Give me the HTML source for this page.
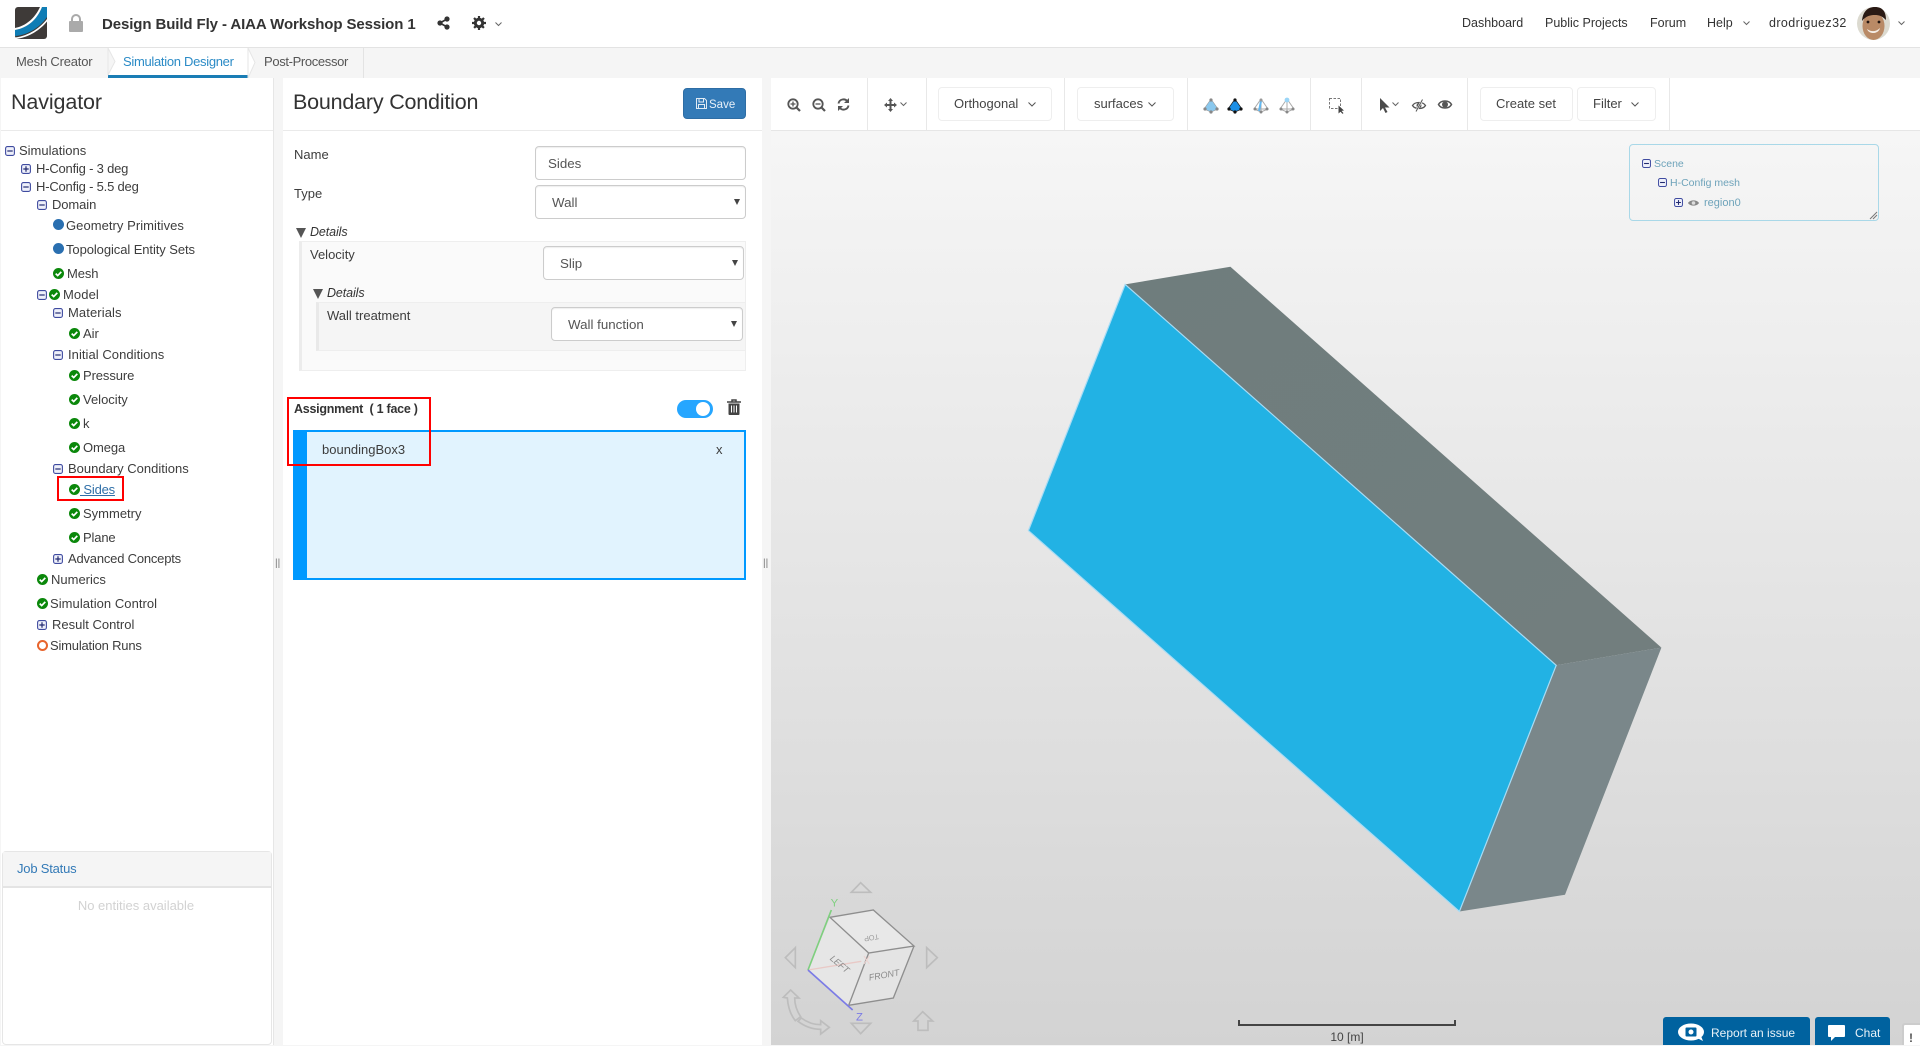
<!DOCTYPE html>
<html><head><meta charset="utf-8"><title>Simulation Designer</title>
<style>
html,body{margin:0;padding:0;width:1920px;height:1045px;overflow:hidden;background:#f5f5f5;font-family:"Liberation Sans",sans-serif;color:#3a3a3a}
.a{position:absolute}
.t{position:absolute;white-space:nowrap;font-size:13px;line-height:16px;color:#3d3d3d;margin-top:1px}
.hd{font-size:21.5px;line-height:28px;color:#333;margin-top:0}
.sel,.inp{position:absolute;box-sizing:border-box;background:#fff;border:1px solid #ccc;border-radius:4px;height:34px;font-size:13.33px;line-height:34px;color:#555;box-shadow:inset 0 1px 1px rgba(0,0,0,.07)}
.sel i{position:absolute;right:5px;top:13px;width:0;height:0;border-left:3.5px solid transparent;border-right:3.5px solid transparent;border-top:6px solid #444}
.btn{position:absolute;box-sizing:border-box;height:34px;background:#fff;border:1px solid #eee;border-radius:4px;font-size:13px;line-height:32px;color:#444}
.sep{position:absolute;top:78px;height:52px;width:1px;background:#e8e8e8}
.nv{position:absolute;top:15px;font-size:12.5px;line-height:16px;color:#333;white-space:nowrap}
svg{position:absolute;overflow:visible}
</style></head><body>
<svg width="0" height="0" style="position:absolute"><defs>
<g id="mi"><rect x=".6" y=".6" width="8.8" height="8.8" rx="1.8" fill="#eef0fa" stroke="#3f4ba0" stroke-width="1.1"/><path d="M2.3 5h5.4" stroke="#222a70" stroke-width="1.2"/></g>
<g id="pl"><rect x=".6" y=".6" width="8.8" height="8.8" rx="1.8" fill="#eef0fa" stroke="#3f4ba0" stroke-width="1.1"/><path d="M2.3 5h5.4M5 2.3v5.4" stroke="#222a70" stroke-width="1.2"/></g>
<g id="ck"><circle cx="5.5" cy="5.5" r="5.5" fill="#0b880b"/><path d="M2.7 5.6l2 2 3.6-3.7" fill="none" stroke="#fff" stroke-width="1.7"/></g>
<g id="tri"><path d="M8 1L1 11l7 3 7-3z" fill="#8ac8ee" stroke="#999" stroke-width=".6"/><circle cx="8" cy="2" r="1.6" fill="#888"/><circle cx="2" cy="11" r="1.6" fill="#888"/><circle cx="14" cy="11" r="1.6" fill="#888"/><circle cx="8" cy="14" r="1.6" fill="#888"/></g>
</defs></svg>

<!-- header -->
<div class="a" style="left:0;top:0;width:1920px;height:47px;background:#fff;border-bottom:1px solid #e3e3e3"></div>
<svg style="left:15px;top:7px" width="32" height="32" viewBox="0 0 32 32"><rect width="32" height="32" rx="3" fill="#3e3a38"/><path d="M0 23C12 21 22 13 27 0H32V10C26 19 14 28 0 29z" fill="#0f7db5"/><path d="M0 21C11 19 20 11 25 0H27C22 13 12 21 0 23z" fill="#fff"/><path d="M0 30.500C14 29 26 20 32 12V14.500C26 22 14 31 0 32z" fill="#fff"/></svg>
<svg style="left:69px;top:14px" width="14" height="18" viewBox="0 0 14 18"><path d="M3 8V5a4 4 0 0 1 8 0v3" fill="none" stroke="#aaa" stroke-width="2"/><rect y="7" width="14" height="11" rx="1" fill="#aaa"/></svg>
<div class="t" style="left:102px;top:15px;font-size:15px;line-height:18px;font-weight:bold;color:#333;letter-spacing:-.1px" >Design Build Fly - AIAA Workshop Session 1</div>
<svg style="left:437px;top:16px" width="13" height="14" viewBox="0 0 13 14"><path d="M3 7l7-4M3 7l7 4" stroke="#333" stroke-width="1.6"/><circle cx="3" cy="7" r="2.6" fill="#333"/><circle cx="10" cy="3" r="2.6" fill="#333"/><circle cx="10" cy="11" r="2.6" fill="#333"/></svg>
<svg style="left:472px;top:16px" width="14" height="14" viewBox="0 0 14 14"><circle cx="7" cy="7" r="3.7" fill="none" stroke="#333" stroke-width="3"/><path d="M7 0v14M0 7h14M2 2l10 10M12 2L2 12" stroke="#333" stroke-width="2.2" stroke-dasharray="2.4 9.2 2.4"/></svg>
<svg style="left:495px;top:22px" width="7" height="5" viewBox="0 0 7 5"><path d="M.5 .5L3.5 3.5 6.5 .5" fill="none" stroke="#666"/></svg>
<div class="nv" style="left:1462px">Dashboard</div>
<div class="nv" style="left:1545px">Public Projects</div>
<div class="nv" style="left:1650px">Forum</div>
<div class="nv" style="left:1707px">Help</div>
<svg style="left:1743px;top:21px" width="7" height="5" viewBox="0 0 7 5"><path d="M.5 .5L3.5 3.5 6.5 .5" fill="none" stroke="#666"/></svg>
<div class="nv" style="left:1769px;letter-spacing:.4px">drodriguez32</div>
<svg style="left:1857px;top:7px" width="33" height="33" viewBox="0 0 33 33"><circle cx="16.5" cy="16.5" r="16.5" fill="#dcdad0"/><ellipse cx="16.5" cy="19" rx="11" ry="14" fill="#b98a66"/><path d="M5 14C6 3 12 0 18 0c8 0 11 5 11 13-4-4-7-5-11-5-5 0-9 1-13 6z" fill="#2a1a14"/><path d="M10 22c4 3 9 3 13-1-1 6-11 7-13 1z" fill="#f4ece4"/><circle cx="11" cy="15" r="1.4" fill="#201410"/><circle cx="22" cy="15" r="1.4" fill="#201410"/></svg>
<svg style="left:1898px;top:21px" width="7" height="5" viewBox="0 0 7 5"><path d="M.5 .5L3.5 3.5 6.5 .5" fill="none" stroke="#666"/></svg>

<!-- tabs -->
<div class="a" style="left:0;top:48px;width:363px;height:30px;background:#f5f5f5;border-right:1px solid #e3e3e3"></div>
<div class="a" style="left:108px;top:48px;width:140px;height:27px;background:#fff;border-bottom:3px solid #1a7db5"></div>
<svg style="left:108px;top:48px" width="10" height="27" viewBox="0 0 10 27"><path d="M0 0L7 13.5 0 27z" fill="#f5f5f5" stroke="#e6e6e6"/></svg>
<svg style="left:248px;top:48px" width="10" height="30" viewBox="0 0 10 30"><path d="M0 0L7 14.5 0 30z" fill="#fff" stroke="#e6e6e6"/></svg>
<div class="t" style="left:16px;top:54px;margin-top:0;color:#555;letter-spacing:-.2px">Mesh Creator</div>
<div class="t" style="left:123px;top:54px;margin-top:0;color:#2b8bc6;letter-spacing:-.3px">Simulation Designer</div>
<div class="t" style="left:264px;top:54px;margin-top:0;color:#555;letter-spacing:-.35px">Post-Processor</div>

<!-- navigator panel -->
<div class="a" style="left:1px;top:78px;width:272px;height:967px;background:#fff;border-right:1px solid #e6e6e6"></div>
<div class="a" style="left:1px;top:130px;width:272px;height:1px;background:#eaeaea"></div>
<div class="t hd" style="left:11px;top:88px;letter-spacing:-.12px">Navigator</div>

<svg style="left:5px;top:146px" width="10" height="10"><use href="#mi"/></svg><div class="t" style="left:19px;top:142px">Simulations</div>
<svg style="left:21px;top:164px" width="10" height="10"><use href="#pl"/></svg><div class="t" style="left:36px;top:160px;letter-spacing:-.2px">H-Config - 3 deg</div>
<svg style="left:21px;top:182px" width="10" height="10"><use href="#mi"/></svg><div class="t" style="left:36px;top:178px;letter-spacing:-.2px">H-Config - 5.5 deg</div>
<svg style="left:37px;top:200px" width="10" height="10"><use href="#mi"/></svg><div class="t" style="left:52px;top:196px;letter-spacing:-.1px">Domain</div>
<div class="a" style="left:53px;top:219px;width:11px;height:11px;border-radius:50%;background:#2a6fb0"></div><div class="t" style="left:66px;top:217px;letter-spacing:.05px">Geometry Primitives</div>
<div class="a" style="left:53px;top:243px;width:11px;height:11px;border-radius:50%;background:#2a6fb0"></div><div class="t" style="left:66px;top:241px;letter-spacing:-.08px">Topological Entity Sets</div>
<svg style="left:53px;top:268px" width="11" height="11"><use href="#ck"/></svg><div class="t" style="left:67px;top:265px;letter-spacing:-.1px">Mesh</div>
<svg style="left:37px;top:290px" width="10" height="10"><use href="#mi"/></svg><svg style="left:49px;top:289px" width="11" height="11"><use href="#ck"/></svg><div class="t" style="left:63px;top:286px;letter-spacing:.1px">Model</div>
<svg style="left:53px;top:308px" width="10" height="10"><use href="#mi"/></svg><div class="t" style="left:68px;top:304px;letter-spacing:.1px">Materials</div>
<svg style="left:69px;top:328px" width="11" height="11"><use href="#ck"/></svg><div class="t" style="left:83px;top:325px">Air</div>
<svg style="left:53px;top:350px" width="10" height="10"><use href="#mi"/></svg><div class="t" style="left:68px;top:346px;letter-spacing:.05px">Initial Conditions</div>
<svg style="left:69px;top:370px" width="11" height="11"><use href="#ck"/></svg><div class="t" style="left:83px;top:367px;letter-spacing:-.1px">Pressure</div>
<svg style="left:69px;top:394px" width="11" height="11"><use href="#ck"/></svg><div class="t" style="left:83px;top:391px">Velocity</div>
<svg style="left:69px;top:418px" width="11" height="11"><use href="#ck"/></svg><div class="t" style="left:83px;top:415px">k</div>
<svg style="left:69px;top:442px" width="11" height="11"><use href="#ck"/></svg><div class="t" style="left:83px;top:439px;letter-spacing:-.1px">Omega</div>
<svg style="left:53px;top:464px" width="10" height="10"><use href="#mi"/></svg><div class="t" style="left:68px;top:460px">Boundary Conditions</div>
<div class="a" style="left:57px;top:476px;width:63px;height:21px;border:2px solid #f00"></div>
<svg style="left:69px;top:484px" width="11" height="11"><use href="#ck"/></svg><div class="t" style="left:80px;top:481px;color:#2f6fa8;text-decoration:underline;letter-spacing:-.2px">&nbsp;Sides</div>
<svg style="left:69px;top:508px" width="11" height="11"><use href="#ck"/></svg><div class="t" style="left:83px;top:505px">Symmetry</div>
<svg style="left:69px;top:532px" width="11" height="11"><use href="#ck"/></svg><div class="t" style="left:83px;top:529px;letter-spacing:-.15px">Plane</div>
<svg style="left:53px;top:554px" width="10" height="10"><use href="#pl"/></svg><div class="t" style="left:68px;top:550px;letter-spacing:-.2px">Advanced Concepts</div>
<svg style="left:37px;top:574px" width="11" height="11"><use href="#ck"/></svg><div class="t" style="left:51px;top:571px">Numerics</div>
<svg style="left:37px;top:598px" width="11" height="11"><use href="#ck"/></svg><div class="t" style="left:50px;top:595px;letter-spacing:.05px">Simulation Control</div>
<svg style="left:37px;top:620px" width="10" height="10"><use href="#pl"/></svg><div class="t" style="left:52px;top:616px">Result Control</div>
<div class="a" style="left:37px;top:640px;width:7px;height:7px;border:2px solid #e8642c;border-radius:50%"></div><div class="t" style="left:50px;top:637px;letter-spacing:-.2px">Simulation Runs</div>

<!-- job status -->
<div class="a" style="left:2px;top:851px;width:270px;height:194px;box-sizing:border-box;border:1px solid #e6e6e6;border-radius:4px;background:#fff"></div>
<div class="a" style="left:3px;top:852px;width:268px;height:34px;background:#f5f5f5;border-bottom:2px solid #e4e4e4"></div>
<div class="t" style="left:17px;top:860px;color:#337ab7;letter-spacing:-.2px">Job Status</div>
<div class="t" style="left:1px;top:897px;width:270px;text-align:center;color:#d2d2d2">No entities available</div>

<div class="t" style="left:275px;top:555px;font-size:10px;color:#777">||</div>
<div class="t" style="left:763px;top:555px;font-size:10px;color:#777">||</div>

<!-- boundary panel -->
<div class="a" style="left:283px;top:78px;width:479px;height:967px;background:#fff"></div>
<div class="a" style="left:283px;top:130px;width:479px;height:1px;background:#eaeaea"></div>
<div class="t hd" style="left:293px;top:88px;letter-spacing:-.2px">Boundary Condition</div>
<div class="a" style="left:683px;top:88px;width:63px;height:31px;background:#337ab7;border-radius:4px;border:1px solid #2e6da4;box-sizing:border-box"></div>
<svg style="left:696px;top:98px" width="11" height="11" viewBox="0 0 11 11"><path d="M.5 .5h8l2 2v8h-10zM3 .5v3.500h4.500V.5M2.500 10.500V6.500h6v4" fill="none" stroke="#fff" stroke-opacity=".85"/></svg>
<div class="t" style="left:709px;top:96px;font-size:11.500px;color:#e8f0f8">Save</div>

<div class="t" style="left:294px;top:146px">Name</div>
<div class="inp" style="left:535px;top:146px;width:211px;padding-left:12px">Sides</div>
<div class="t" style="left:294px;top:185px">Type</div>
<div class="sel" style="left:535px;top:185px;width:211px;padding-left:16px">Wall<i></i></div>

<div class="a" style="left:296px;top:228px;width:0;height:0;border-left:5.500px solid transparent;border-right:5.500px solid transparent;border-top:10px solid #555"></div>
<div class="t" style="left:310px;top:224px;margin-top:0;font-style:italic;font-size:12.500px;color:#333;letter-spacing:-.1px">Details</div>
<div class="a" style="left:299px;top:241px;width:447px;height:130px;box-sizing:border-box;background:#fafafa;border:1px solid #eee;border-left:3px solid #ececec"></div>
<div class="t" style="left:310px;top:246px">Velocity</div>
<div class="sel" style="left:543px;top:246px;width:201px;padding-left:16px">Slip<i></i></div>
<div class="a" style="left:313px;top:289px;width:0;height:0;border-left:5.500px solid transparent;border-right:5.500px solid transparent;border-top:10px solid #555"></div>
<div class="t" style="left:327px;top:285px;margin-top:0;font-style:italic;font-size:12.500px;color:#333;letter-spacing:-.1px">Details</div>
<div class="a" style="left:316px;top:302px;width:429px;height:49px;box-sizing:border-box;background:#f5f5f5;border-top:1px solid #eee;border-bottom:1px solid #eee;border-left:3px solid #e9e9e9"></div>
<div class="t" style="left:327px;top:307px">Wall treatment</div>
<div class="sel" style="left:551px;top:307px;width:192px;padding-left:16px">Wall function<i></i></div>

<div class="a" style="left:293px;top:430px;width:453px;height:150px;box-sizing:border-box;background:#e1f3fe;border:2px solid #0099ff;border-left-width:14px"></div>
<div class="a" style="left:287px;top:397px;width:140px;height:65px;border:2px solid #f00"></div>
<div class="t" style="left:294px;top:400px;font-weight:bold;font-size:12.500px;color:#333;letter-spacing:-.25px">Assignment &nbsp;( 1 face )</div>
<div class="t" style="left:322px;top:441px">boundingBox3</div>
<div class="t" style="left:716px;top:441px">x</div>
<div class="a" style="left:677px;top:400px;width:36px;height:18px;border-radius:9px;background:#26a6ff"></div>
<div class="a" style="left:696px;top:402px;width:14px;height:14px;border-radius:50%;background:#fff"></div>
<svg style="left:727px;top:399px" width="14" height="16" viewBox="0 0 14 16"><path d="M0 3h14M5 3V1h4v2" fill="none" stroke="#444" stroke-width="1.500"/><path d="M1.500 4.500h11V15a1 1 0 0 1-1 1h-9a1 1 0 0 1-1-1z" fill="#444"/><path d="M4.500 6.500v7M7 6.500v7M9.500 6.500v7" stroke="#fff" stroke-width="1"/></svg>

<!-- viewer -->
<div class="a" style="left:771px;top:130px;width:1149px;height:915px;background:linear-gradient(#f6f6f6,#d3d3d3)"></div>
<div class="a" style="left:771px;top:78px;width:1149px;height:52px;background:#fff;border-bottom:1px solid #e6e6e6;box-sizing:content-box"></div>
<div class="sep" style="left:867px"></div><div class="sep" style="left:926px"></div><div class="sep" style="left:1064px"></div><div class="sep" style="left:1187px"></div><div class="sep" style="left:1310px"></div><div class="sep" style="left:1361px"></div><div class="sep" style="left:1467px"></div><div class="sep" style="left:1669px"></div>

<svg style="left:787px;top:98px" width="14" height="14" viewBox="0 0 14 14"><circle cx="6" cy="6" r="4.700" fill="none" stroke="#555" stroke-width="1.800"/><path d="M9.500 9.500L13 13" stroke="#555" stroke-width="2.200"/><path d="M3.500 6h5M6 3.500v5" stroke="#555" stroke-width="1.300"/></svg>
<svg style="left:812px;top:98px" width="14" height="14" viewBox="0 0 14 14"><circle cx="6" cy="6" r="4.700" fill="none" stroke="#555" stroke-width="1.800"/><path d="M9.500 9.500L13 13" stroke="#555" stroke-width="2.200"/><path d="M3.500 6h5" stroke="#555" stroke-width="1.300"/></svg>
<svg style="left:837px;top:98px" width="13" height="13" viewBox="0 0 13 13"><path d="M1.500 5.500A5 5 0 0 1 10.500 3.500M11.500 7.500A5 5 0 0 1 2.500 9.500" fill="none" stroke="#555" stroke-width="1.900"/><path d="M12 0v5H7zM1 13V8h5z" fill="#555"/></svg>
<svg style="left:884px;top:98px" width="13" height="14" viewBox="0 0 13 14"><path d="M6.500 0l2.500 3H4zM6.500 14L4 11h5zM0 7l3-2.500v5zM13 7l-3-2.500v5z" fill="#555"/><path d="M6.500 2v10M2 7h9" stroke="#555" stroke-width="2"/></svg>
<svg style="left:900px;top:102px" width="7" height="5" viewBox="0 0 7 5"><path d="M.5 .5L3.500 3.500 6.500 .5" fill="none" stroke="#666"/></svg>

<div class="btn" style="left:938px;top:87px;width:114px;padding-left:15px">Orthogonal<svg style="left:89px;top:14px" width="8" height="5" viewBox="0 0 8 5"><path d="M.5 .5L4 4 7.500 .5" fill="none" stroke="#555"/></svg></div>
<div class="btn" style="left:1077px;top:87px;width:97px;padding-left:16px">surfaces<svg style="left:70px;top:14px" width="8" height="5" viewBox="0 0 8 5"><path d="M.5 .5L4 4 7.500 .5" fill="none" stroke="#555"/></svg></div>

<svg style="left:1203px;top:98px" width="16" height="16"><use href="#tri"/></svg>
<svg style="left:1227px;top:98px" width="16" height="16" viewBox="0 0 16 16"><path d="M8 1L1 11l7 3 7-3z" fill="#1c8fe6" stroke="#222" stroke-width=".7"/><circle cx="8" cy="2" r="1.600" fill="#111"/><circle cx="2" cy="11" r="1.600" fill="#111"/><circle cx="14" cy="11" r="1.600" fill="#111"/><circle cx="8" cy="14" r="1.600" fill="#111"/></svg>
<svg style="left:1253px;top:98px" width="16" height="16" viewBox="0 0 16 16"><path d="M8 1L1 11l7 3 7-3zM8 1v13M1 11h13" fill="none" stroke="#aaa"/><path d="M8 3L6 13" stroke="#62b8f0" stroke-width="2"/><circle cx="8" cy="2" r="1.500" fill="#999"/><circle cx="2" cy="11" r="1.500" fill="#888"/><circle cx="14" cy="11" r="1.500" fill="#888"/><circle cx="8" cy="14" r="1.500" fill="#888"/></svg>
<svg style="left:1279px;top:98px" width="16" height="16" viewBox="0 0 16 16"><path d="M8 1L1 11l7 3 7-3zM8 1v13M1 11h13" fill="none" stroke="#aaa"/><circle cx="8" cy="2" r="2.400" fill="#9ad5f7"/><circle cx="2" cy="11" r="1.500" fill="#888"/><circle cx="14" cy="11" r="1.500" fill="#888"/><circle cx="8" cy="14" r="1.500" fill="#888"/></svg>

<svg style="left:1329px;top:98px" width="16" height="16" viewBox="0 0 16 16"><rect x=".5" y=".5" width="11" height="10" fill="none" stroke="#777" stroke-dasharray="2.500 1.500"/><path d="M9.500 7.500v8l2-1.800 2 2.200 1-.8-2-2.200 2.500-.4z" fill="#444"/></svg>
<svg style="left:1379px;top:98px" width="11" height="15" viewBox="0 0 11 15"><path d="M1 0v13l3-3 2.500 5 2-1-2.500-4.500H10.500z" fill="#4a4a4a"/></svg>
<svg style="left:1392px;top:102px" width="7" height="5" viewBox="0 0 7 5"><path d="M.5 .5L3.500 3.500 6.500 .5" fill="none" stroke="#666"/></svg>
<svg style="left:1412px;top:99px" width="14" height="13" viewBox="0 0 14 13"><path d="M.5 6.500C3 2.500 11 2.500 13.500 6.500 11 10.500 3 10.500 .5 6.500z" fill="none" stroke="#555" stroke-width="1.300"/><circle cx="7" cy="6.500" r="2.500" fill="#555"/><path d="M10.500 .5L4 12.500" stroke="#fff" stroke-width="2"/><path d="M10.500 .5L4 12.500" stroke="#555" stroke-width="1"/></svg>
<svg style="left:1438px;top:99px" width="14" height="11" viewBox="0 0 14 11"><path d="M.5 5.500C3 .8 11 .8 13.500 5.500 11 10.200 3 10.200 .5 5.500z" fill="none" stroke="#555" stroke-width="1.500"/><circle cx="7" cy="5.500" r="3" fill="#555"/></svg>

<div class="btn" style="left:1480px;top:87px;width:93px;padding-left:15px">Create set</div>
<div class="btn" style="left:1577px;top:87px;width:79px;padding-left:15px">Filter<svg style="left:53px;top:14px" width="8" height="5" viewBox="0 0 8 5"><path d="M.5 .5L4 4 7.500 .5" fill="none" stroke="#555"/></svg></div>

<!-- scene tree -->
<div class="a" style="left:1629px;top:144px;width:250px;height:77px;box-sizing:border-box;border:1px solid #a9d8e8;border-radius:4px"></div>
<svg style="left:1870px;top:212px" width="7" height="7" viewBox="0 0 7 7"><path d="M0 7L7 0M3 7L7 3" stroke="#777"/></svg>
<svg style="left:1642px;top:159px" width="9" height="9" viewBox="0 0 10 10"><use href="#mi"/></svg><div class="t" style="left:1654px;top:155px;font-size:10.500px;color:#6ea3ba">Scene</div>
<svg style="left:1658px;top:178px" width="9" height="9" viewBox="0 0 10 10"><use href="#mi"/></svg><div class="t" style="left:1670px;top:174px;font-size:10.500px;color:#6ea3ba">H-Config mesh</div>
<svg style="left:1674px;top:198px" width="9" height="9" viewBox="0 0 10 10"><use href="#pl"/></svg>
<svg style="left:1688px;top:199px" width="11" height="8" viewBox="0 0 11 8"><path d="M0 4C2 .5 9 .5 11 4 9 7.500 2 7.500 0 4z" fill="#888"/><circle cx="5.500" cy="4" r="1.800" fill="#ddd"/></svg>
<div class="t" style="left:1704px;top:194px;font-size:11px;color:#6ea3ba">region0</div>

<!-- 3D box -->
<svg style="left:0;top:0" width="1920" height="1045" viewBox="0 0 1920 1045">
<defs><linearGradient id="gt" x1="0" y1="0" x2="1" y2="1"><stop offset="0" stop-color="#6f7d7d"/><stop offset="1" stop-color="#727e7e"/></linearGradient></defs>
<polygon points="1125.200,284.400 1230.400,266.700 1661.400,647.600 1556.200,665.300" fill="url(#gt)"/>
<polygon points="1556.200,665.300 1661.400,647.600 1565,894.700 1459.400,911.500" fill="#7a878a"/>
<polygon points="1125.200,284.400 1556.200,665.300 1459.400,911.500 1028.400,530.600" fill="#22b2e4" stroke="#a8dcf5" stroke-width="1.200"/>
</svg>

<!-- gizmo -->
<svg style="left:770px;top:860px" width="200" height="185" viewBox="0 0 600 555">
<g fill="none" stroke="#bdbdbd" stroke-width="5">
<path d="M272 68L302 97H244z"/><path d="M76 263L46 293 76 323z"/><path d="M470 263L502 293 470 323z"/><path d="M244 490H302L272 521z"/>
<path d="M458 455L431 483 444 483 444 511 474 511 474 483 488 483z"/>
<path d="M62 390L40 412 52 414C54 440 62 465 76 482L92 470C80 452 74 435 74 414L87 414z"/>
<path d="M84 484C105 500 125 508 152 508L152 522 178 502 152 482 152 494C130 494 110 486 94 474z"/>
</g>
<polygon points="180,172 310,150 432,258 296,279" fill="#e8e8e8"/>
<polygon points="180,172 296,279 236,436 114,330" fill="#e6e6e6"/>
<polygon points="296,279 432,258 370,414 236,436" fill="#e4e4e4"/>
<path d="M180 172L310 150 432 258 296 279zM296 279L236 436M432 258L370 414 236 436" fill="none" stroke="#8e8e8e" stroke-width="4"/>
<path d="M114 330L274 304" stroke="#e9c9c6" stroke-width="4"/><path d="M282 288L298 312M298 288L282 312" stroke="#edd2cf" stroke-width="3"/>
<path d="M114 330L184 150" stroke="#7fcf7f" stroke-width="5"/>
<path d="M114 330L248 450" stroke="#7b7be6" stroke-width="5"/>
<text x="182" y="140" font-family="Liberation Sans,sans-serif" font-size="34" fill="#7fcf7f">Y</text>
<text x="258" y="482" font-family="Liberation Sans,sans-serif" font-size="34" fill="#7b7be6">Z</text>
<text font-family="Liberation Sans,sans-serif" font-size="27" fill="#8a8a8a" font-style="italic" transform="translate(178 298) rotate(40)">LEFT</text>
<text font-family="Liberation Sans,sans-serif" font-size="27" fill="#8a8a8a" font-style="italic" transform="translate(298 362) rotate(-10)">FRONT</text>
<text font-family="Liberation Sans,sans-serif" font-size="22" fill="#9a9a9a" transform="translate(325 222) rotate(170)">TOP</text>
</svg>

<!-- scale -->
<div class="a" style="left:1238px;top:1020px;width:218px;box-sizing:border-box;height:6px;border:2px solid #444;border-top:0"></div>
<div class="t" style="left:1238px;top:1028px;width:218px;text-align:center;font-size:12px;color:#444">10 [m]</div>

<!-- bottom buttons -->
<div class="a" style="left:1663px;top:1017px;width:147px;height:28px;background:#00629f;border-radius:3px 3px 0 0"></div>
<svg style="left:1677px;top:1023px" width="28" height="18" viewBox="0 0 28 18"><ellipse cx="14" cy="9" rx="13" ry="8.500" fill="#fff"/><rect x="8.500" y="4.500" width="11" height="9" rx="1" fill="#00629f"/><circle cx="14" cy="9" r="2.500" fill="#fff"/><path d="M20 15l6 3-2-5z" fill="#fff"/></svg>
<div class="t" style="left:1711px;top:1024px;font-size:12px;color:#e8f2f8">Report an issue</div>
<div class="a" style="left:1815px;top:1017px;width:75px;height:28px;background:#00629f;border-radius:3px 3px 0 0"></div>
<svg style="left:1828px;top:1025px" width="17" height="16" viewBox="0 0 17 16"><path d="M1 0h15a1 1 0 0 1 1 1v10a1 1 0 0 1-1 1H7l-4 4v-4H1a1 1 0 0 1-1-1V1a1 1 0 0 1 1-1z" fill="#fff"/></svg>
<div class="t" style="left:1855px;top:1024px;font-size:12px;color:#e8f2f8">Chat</div>
<div class="a" style="left:1902px;top:1023px;width:18px;height:22px;background:#fff;border:2px solid #ccc;border-radius:3px 0 0 0;box-sizing:border-box;border-right:0;border-bottom:0"></div>
<div class="t" style="left:1909px;top:1029px;font-size:12px;font-weight:bold;color:#555">!</div>
</body></html>
